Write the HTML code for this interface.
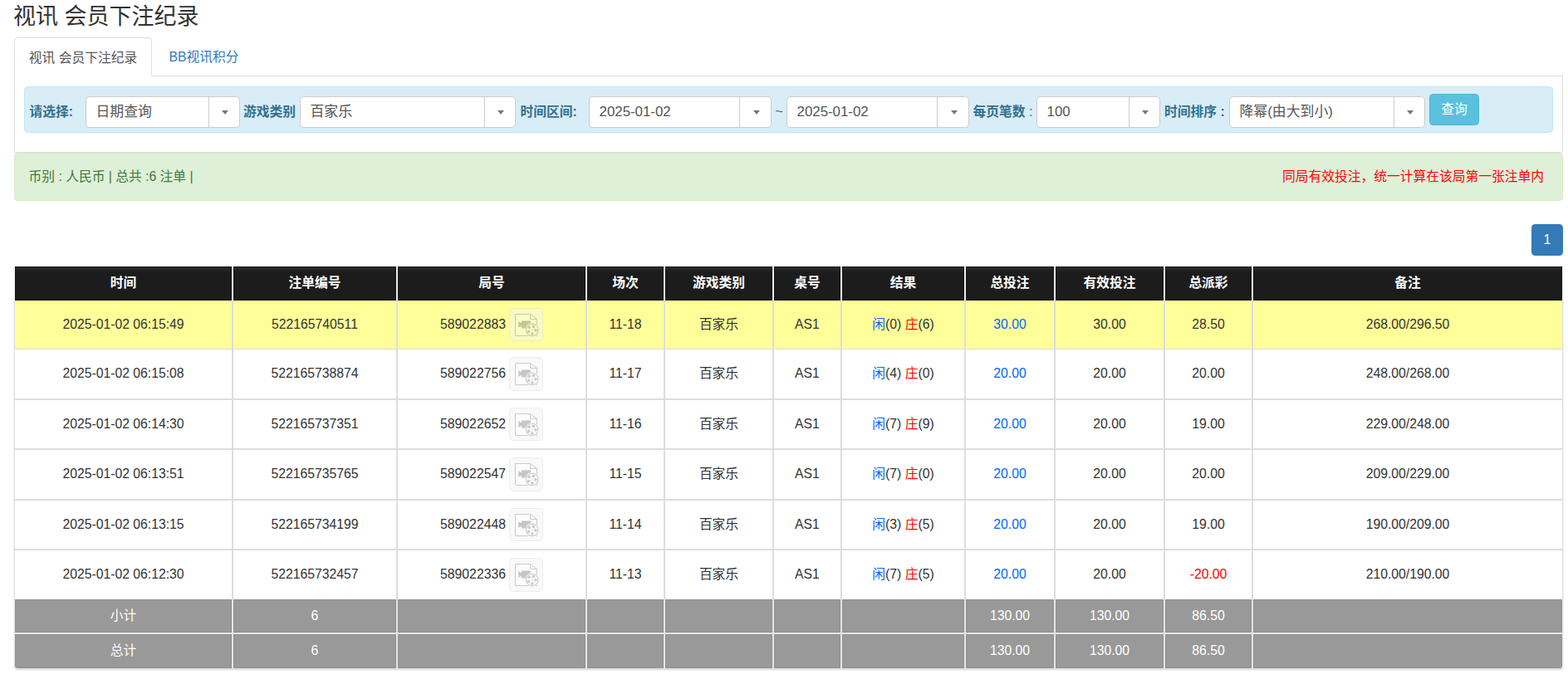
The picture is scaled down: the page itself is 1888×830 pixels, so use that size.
<!DOCTYPE html>
<html lang="zh-CN">
<head>
<meta charset="utf-8">
<title>视讯 会员下注纪录</title>
<style>
*{box-sizing:border-box}
html,body{margin:0;padding:0}
body{width:1888px;height:830px;overflow:hidden;background:#fff;position:relative;font-family:"Liberation Sans","Noto Sans CJK SC",sans-serif;font-size:15.75px;color:#333;line-height:22.5px}
ul{list-style:none;margin:0;padding:0}
a{text-decoration:none;color:inherit}
h3{position:absolute;left:16px;top:5px;margin:0;font-size:27px;line-height:30px;font-weight:400;color:#333;white-space:nowrap}
/* tabs */
.nav-tabs{position:absolute;left:17px;top:45px;width:1865px;height:47px;border-bottom:1px solid #ddd}
.nav-tabs li{position:absolute;top:0;height:47px;line-height:47px;white-space:nowrap}
.nav-tabs li a{display:block;height:47px}
.nav-tabs li.active{left:0;width:166px}
.nav-tabs li.active a{border:1px solid #ddd;border-bottom:0;border-radius:4.5px 4.5px 0 0;background:#fff;color:#555;text-align:center;line-height:47px}
.nav-tabs li.t2{left:169px;width:120px}
.nav-tabs li.t2 a{color:#337ab7;padding-left:17.5px;line-height:47px}
.tab-content{position:absolute;left:17px;top:92px;width:1865px;height:92px;border:1px solid #ddd;border-top:0}
/* filter */
.filter{position:absolute;left:11px;top:12px;width:1841px;height:56px;margin:0;background:#d9edf7;border:1px solid #bce8f1;border-radius:4.5px}
.filter label{position:absolute;top:18px;height:24px;line-height:24px;font-weight:700;color:#31708f;white-space:nowrap;margin:0}
.filter label i{font-style:normal;font-weight:400}
.sel{position:absolute;top:11px;height:38px;background:#fff;border:1px solid #ccc;border-radius:4.5px;color:#555;font-size:16.875px;line-height:36px;padding-left:11.5px;white-space:nowrap;overflow:hidden}
.sel:before{content:"";position:absolute;right:var(--sr,36px);top:0;width:1px;height:36px;background:#ccc}
.sel:after{content:"";position:absolute;right:13.5px;top:15.5px;border-left:4.5px solid transparent;border-right:4.5px solid transparent;border-top:5px solid #787878}
.btn-info{position:absolute;left:1691px;top:8px;width:60px;height:38px;margin:0;padding:0;background:#5bc0de;border:1px solid #46b8da;border-radius:4.5px;color:#fff;text-align:center;font:inherit;line-height:35.5px;white-space:nowrap;display:block}
/* alert */
.alert{position:absolute;left:17px;top:184px;width:1865px;height:58px;background:#dff0d8;border:1px solid #d6e9c6;border-radius:4.5px;color:#3c763d;line-height:56px;white-space:nowrap}
.alert .l{position:absolute;left:16.5px;top:0}
.alert .r{position:absolute;right:22px;top:0;color:#f00;line-height:56px}
/* pagination */
.pagination{position:absolute;left:1844px;top:270px;width:38px;height:38px}
.pagination li,.pagination a{display:block;width:38px;height:38px}
.pagination a{background:#337ab7;border-radius:4.5px;color:#fff;text-align:center;line-height:38px}
/* table */
.grid{position:absolute;left:17px;top:320px;width:1865px;border-collapse:separate;border-spacing:0;table-layout:fixed;border-radius:0 0 4px 4px;box-shadow:0 1px 2px #d1d1d1}
.grid th,.grid td{padding:0;margin:0;text-align:center;white-space:nowrap;vertical-align:top;font-weight:400;border:0 solid #ddd;border-left-width:1px;border-right-width:1px}
.grid thead th{height:42px;line-height:39px;border-color:#efefef;border-top:1px solid #f2f2f2;background:linear-gradient(#2b2b2b 1px,#1c1c1c 7px);color:#fff;font-weight:700;box-shadow:inset 0 1px 0 #1e1e1e,inset 0 -1px 0 #101010,inset 1px 0 0 #151515,inset -1px 0 0 #151515}
.grid tbody td{background:#fff;line-height:58px}
.grid tbody tr.hl td{background:#ff9}
.grid tr.r1 td{height:59px;border-bottom-width:1px}
.grid tr.r2 td{height:60px;border-bottom-width:1px}
.grid tr.r3 td{height:60px;border-top-width:1px;border-bottom-width:1px}
.grid tr.r4 td{height:61px;border-top-width:1px;border-bottom-width:1px}
.grid tr.r5 td{height:60px;border-top-width:1px;border-bottom-width:1px}
.grid tr.r6 td{height:60px;border-top-width:1px}
.grid tfoot td{background:#999;color:#fff;border-color:#e6e6e6;box-shadow:inset 0 0 0 1px #909090}
.grid tr.f1 td{height:41px;line-height:40px;border-bottom-width:1px}
.grid tr.f2 td{height:43px;line-height:39px;border-top-width:1px;border-bottom-width:1px}
.grid tr.f2 td:first-child{border-bottom-left-radius:4px}
.grid tr.f2 td:last-child{border-bottom-right-radius:4px}
.bl{color:#06f}
.rd{color:#f00}
.ib{display:inline-block;width:41px;height:0;margin-left:4px;position:relative;vertical-align:baseline}
.ib b{position:absolute;left:0;top:-25px;width:41px;height:41px;border:1px solid #ddd;border-radius:5px;background:#f5f5f5;opacity:.5;display:block}
.ib svg{position:absolute;left:-1px;top:-1px}
</style>
</head>
<body>
<h3>视讯 会员下注纪录</h3>
<ul class="nav-tabs"><li class="active"><a>视讯 会员下注纪录</a></li><li class="t2"><a>BB视讯积分</a></li></ul>
<div class="tab-content">
<form class="filter">
<label style="left:5.5px">请选择:</label>
<span class="sel" style="left:73px;width:186px">日期查询</span>
<label style="left:263px">游戏类别</label>
<span class="sel" style="left:331px;width:260px">百家乐</span>
<label style="left:596.5px">时间区间:</label>
<span class="sel" style="left:679px;width:220px;--sr:37px">2025-01-02</span>
<label style="left:903.5px;font-weight:400">~</label>
<span class="sel" style="left:917px;width:220px;--sr:37px">2025-01-02</span>
<label style="left:1141.5px">每页笔数<i> :</i></label>
<span class="sel" style="left:1218px;width:149px">100</span>
<label style="left:1372px">时间排序 :</label>
<span class="sel" style="left:1450px;width:236px">降幂(由大到小)</span>
<button type="button" class="btn-info">查询</button>
</form>
</div>
<div class="alert"><span class="l">币别 : 人民币 | 总共 :6 注单 |</span><span class="r">同局有效投注，统一计算在该局第一张注单内</span></div>
<ul class="pagination"><li class="active"><a>1</a></li></ul>
<table class="grid">
<colgroup><col style="width:263px"><col style="width:198px"><col style="width:228px"><col style="width:94px"><col style="width:131px"><col style="width:82px"><col style="width:149px"><col style="width:108px"><col style="width:132px"><col style="width:106px"><col style="width:374px"></colgroup>
<thead><tr><th>时间</th><th>注单编号</th><th>局号</th><th>场次</th><th>游戏类别</th><th>桌号</th><th>结果</th><th>总投注</th><th>有效投注</th><th>总派彩</th><th>备注</th></tr></thead>
<tbody>
<tr class="r1 hl"><td>2025-01-02 06:15:49</td><td>522165740511</td><td>589022883<span class="ib"><b style="height:40px"><svg viewBox="0 0 41 41" width="41" height="41" aria-hidden="true"><path d="M7.5 7.5H25.5L33.5 13.5V33.5H7.5Z" fill="#fafafa" stroke="#999" stroke-width="1"/><path d="M25.5 7.5V13.5H33.5" fill="none" stroke="#999" stroke-width="1"/><path d="M11.3 16.3L15 18.2V15.6H26V24.4H15V21.8L11.3 23.7Z" fill="#8e8e8e"/><circle cx="27.7" cy="26.5" r="8.4" fill="#fff"/><circle cx="27.7" cy="26.5" r="7.3" fill="#f4f4f4" stroke="#a4a4a4" stroke-width="1.2"/><circle cx="29.3" cy="22.4" r="1.8" fill="#999"/><circle cx="31.9" cy="26.8" r="1.8" fill="#999"/><circle cx="27.8" cy="31.1" r="1.8" fill="#999"/><circle cx="23.5" cy="28.5" r="1.8" fill="#999"/><circle cx="24.1" cy="23.3" r="1.8" fill="#999"/><circle cx="27.7" cy="26.5" r="0.7" fill="#bbb"/></svg></b></span></td><td>11-18</td><td>百家乐</td><td>AS1</td><td><span class="bl">闲</span>(0) <span class="rd">庄</span>(6)</td><td><span class="bl">30.00</span></td><td>30.00</td><td>28.50</td><td>268.00/296.50</td></tr>
<tr class="r2"><td>2025-01-02 06:15:08</td><td>522165738874</td><td>589022756<span class="ib"><b style="height:41px"><svg viewBox="0 0 41 41" width="41" height="41" aria-hidden="true"><path d="M7.5 7.5H25.5L33.5 13.5V33.5H7.5Z" fill="#fafafa" stroke="#999" stroke-width="1"/><path d="M25.5 7.5V13.5H33.5" fill="none" stroke="#999" stroke-width="1"/><path d="M11.3 16.3L15 18.2V15.6H26V24.4H15V21.8L11.3 23.7Z" fill="#8e8e8e"/><circle cx="27.7" cy="26.5" r="8.4" fill="#fff"/><circle cx="27.7" cy="26.5" r="7.3" fill="#f4f4f4" stroke="#a4a4a4" stroke-width="1.2"/><circle cx="29.3" cy="22.4" r="1.8" fill="#999"/><circle cx="31.9" cy="26.8" r="1.8" fill="#999"/><circle cx="27.8" cy="31.1" r="1.8" fill="#999"/><circle cx="23.5" cy="28.5" r="1.8" fill="#999"/><circle cx="24.1" cy="23.3" r="1.8" fill="#999"/><circle cx="27.7" cy="26.5" r="0.7" fill="#bbb"/></svg></b></span></td><td>11-17</td><td>百家乐</td><td>AS1</td><td><span class="bl">闲</span>(4) <span class="rd">庄</span>(0)</td><td><span class="bl">20.00</span></td><td>20.00</td><td>20.00</td><td>248.00/268.00</td></tr>
<tr class="r3"><td>2025-01-02 06:14:30</td><td>522165737351</td><td>589022652<span class="ib"><b style="height:40px"><svg viewBox="0 0 41 41" width="41" height="41" aria-hidden="true"><path d="M7.5 7.5H25.5L33.5 13.5V33.5H7.5Z" fill="#fafafa" stroke="#999" stroke-width="1"/><path d="M25.5 7.5V13.5H33.5" fill="none" stroke="#999" stroke-width="1"/><path d="M11.3 16.3L15 18.2V15.6H26V24.4H15V21.8L11.3 23.7Z" fill="#8e8e8e"/><circle cx="27.7" cy="26.5" r="8.4" fill="#fff"/><circle cx="27.7" cy="26.5" r="7.3" fill="#f4f4f4" stroke="#a4a4a4" stroke-width="1.2"/><circle cx="29.3" cy="22.4" r="1.8" fill="#999"/><circle cx="31.9" cy="26.8" r="1.8" fill="#999"/><circle cx="27.8" cy="31.1" r="1.8" fill="#999"/><circle cx="23.5" cy="28.5" r="1.8" fill="#999"/><circle cx="24.1" cy="23.3" r="1.8" fill="#999"/><circle cx="27.7" cy="26.5" r="0.7" fill="#bbb"/></svg></b></span></td><td>11-16</td><td>百家乐</td><td>AS1</td><td><span class="bl">闲</span>(7) <span class="rd">庄</span>(9)</td><td><span class="bl">20.00</span></td><td>20.00</td><td>19.00</td><td>229.00/248.00</td></tr>
<tr class="r4"><td>2025-01-02 06:13:51</td><td>522165735765</td><td>589022547<span class="ib"><b style="height:41px"><svg viewBox="0 0 41 41" width="41" height="41" aria-hidden="true"><path d="M7.5 7.5H25.5L33.5 13.5V33.5H7.5Z" fill="#fafafa" stroke="#999" stroke-width="1"/><path d="M25.5 7.5V13.5H33.5" fill="none" stroke="#999" stroke-width="1"/><path d="M11.3 16.3L15 18.2V15.6H26V24.4H15V21.8L11.3 23.7Z" fill="#8e8e8e"/><circle cx="27.7" cy="26.5" r="8.4" fill="#fff"/><circle cx="27.7" cy="26.5" r="7.3" fill="#f4f4f4" stroke="#a4a4a4" stroke-width="1.2"/><circle cx="29.3" cy="22.4" r="1.8" fill="#999"/><circle cx="31.9" cy="26.8" r="1.8" fill="#999"/><circle cx="27.8" cy="31.1" r="1.8" fill="#999"/><circle cx="23.5" cy="28.5" r="1.8" fill="#999"/><circle cx="24.1" cy="23.3" r="1.8" fill="#999"/><circle cx="27.7" cy="26.5" r="0.7" fill="#bbb"/></svg></b></span></td><td>11-15</td><td>百家乐</td><td>AS1</td><td><span class="bl">闲</span>(7) <span class="rd">庄</span>(0)</td><td><span class="bl">20.00</span></td><td>20.00</td><td>20.00</td><td>209.00/229.00</td></tr>
<tr class="r5"><td>2025-01-02 06:13:15</td><td>522165734199</td><td>589022448<span class="ib"><b style="height:40px"><svg viewBox="0 0 41 41" width="41" height="41" aria-hidden="true"><path d="M7.5 7.5H25.5L33.5 13.5V33.5H7.5Z" fill="#fafafa" stroke="#999" stroke-width="1"/><path d="M25.5 7.5V13.5H33.5" fill="none" stroke="#999" stroke-width="1"/><path d="M11.3 16.3L15 18.2V15.6H26V24.4H15V21.8L11.3 23.7Z" fill="#8e8e8e"/><circle cx="27.7" cy="26.5" r="8.4" fill="#fff"/><circle cx="27.7" cy="26.5" r="7.3" fill="#f4f4f4" stroke="#a4a4a4" stroke-width="1.2"/><circle cx="29.3" cy="22.4" r="1.8" fill="#999"/><circle cx="31.9" cy="26.8" r="1.8" fill="#999"/><circle cx="27.8" cy="31.1" r="1.8" fill="#999"/><circle cx="23.5" cy="28.5" r="1.8" fill="#999"/><circle cx="24.1" cy="23.3" r="1.8" fill="#999"/><circle cx="27.7" cy="26.5" r="0.7" fill="#bbb"/></svg></b></span></td><td>11-14</td><td>百家乐</td><td>AS1</td><td><span class="bl">闲</span>(3) <span class="rd">庄</span>(5)</td><td><span class="bl">20.00</span></td><td>20.00</td><td>19.00</td><td>190.00/209.00</td></tr>
<tr class="r6"><td>2025-01-02 06:12:30</td><td>522165732457</td><td>589022336<span class="ib"><b style="height:41px"><svg viewBox="0 0 41 41" width="41" height="41" aria-hidden="true"><path d="M7.5 7.5H25.5L33.5 13.5V33.5H7.5Z" fill="#fafafa" stroke="#999" stroke-width="1"/><path d="M25.5 7.5V13.5H33.5" fill="none" stroke="#999" stroke-width="1"/><path d="M11.3 16.3L15 18.2V15.6H26V24.4H15V21.8L11.3 23.7Z" fill="#8e8e8e"/><circle cx="27.7" cy="26.5" r="8.4" fill="#fff"/><circle cx="27.7" cy="26.5" r="7.3" fill="#f4f4f4" stroke="#a4a4a4" stroke-width="1.2"/><circle cx="29.3" cy="22.4" r="1.8" fill="#999"/><circle cx="31.9" cy="26.8" r="1.8" fill="#999"/><circle cx="27.8" cy="31.1" r="1.8" fill="#999"/><circle cx="23.5" cy="28.5" r="1.8" fill="#999"/><circle cx="24.1" cy="23.3" r="1.8" fill="#999"/><circle cx="27.7" cy="26.5" r="0.7" fill="#bbb"/></svg></b></span></td><td>11-13</td><td>百家乐</td><td>AS1</td><td><span class="bl">闲</span>(7) <span class="rd">庄</span>(5)</td><td><span class="bl">20.00</span></td><td>20.00</td><td><span class="rd">-20.00</span></td><td>210.00/190.00</td></tr>
</tbody>
<tfoot>
<tr class="f1"><td>小计</td><td>6</td><td></td><td></td><td></td><td></td><td></td><td>130.00</td><td>130.00</td><td>86.50</td><td></td></tr>
<tr class="f2"><td>总计</td><td>6</td><td></td><td></td><td></td><td></td><td></td><td>130.00</td><td>130.00</td><td>86.50</td><td></td></tr>
</tfoot>
</table>
</body>
</html>
